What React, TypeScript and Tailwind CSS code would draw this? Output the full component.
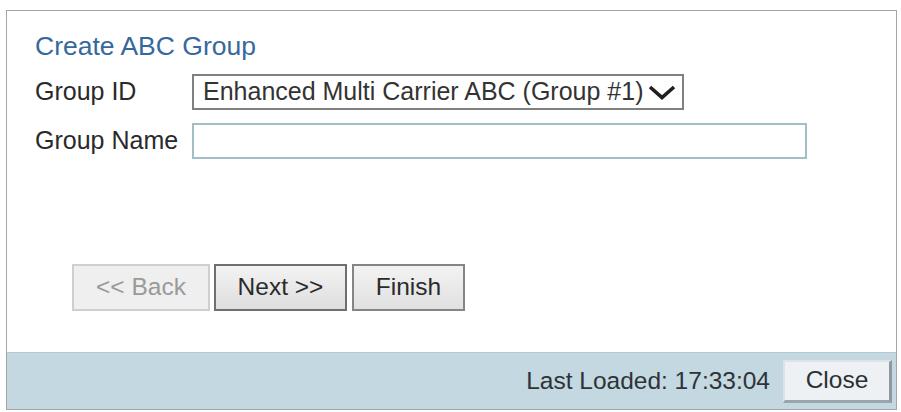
import React from "react";

const font = { fontFamily: '"Liberation Sans", Arial, sans-serif' };

function Chevron() {
  return (
    <svg width="28" height="15" viewBox="0 0 28 15" className="shrink-0">
      <polyline
        points="2,2 14,12.5 26,2"
        fill="none"
        stroke="#1f1f1f"
        strokeWidth="3.6"
        strokeLinejoin="miter"
        strokeLinecap="butt"
      />
    </svg>
  );
}

export default function App() {
  return (
    <div className="w-[901px] h-[412px] bg-white pt-[10px] pl-[6px]" style={font}>
      <div className="w-[891px] h-[400px] border border-[#a6a6a6] flex flex-col bg-white">
        {/* body */}
        <div className="flex-1 pl-[28px] pt-[20px]">
          <h1 className="text-[26.5px] leading-[30px] text-[#37689d]">
            Create ABC Group
          </h1>

          <div className="flex items-center mt-[13px] h-[36px]">
            <span className="w-[157px] text-[25px] text-[#2a2a2a]">Group ID</span>
            <div className="flex items-center gap-[5px] h-[36px] w-[492px] border-2 border-[#808080] pl-[9px] pr-[6px]">
              <span className="text-[25px] text-[#333] whitespace-nowrap">
                Enhanced Multi Carrier ABC (Group #1)
              </span>
              <Chevron />
            </div>
          </div>

          <div className="flex items-center mt-[13px] h-[36px]">
            <span className="w-[157px] text-[25px] text-[#2a2a2a]">Group Name</span>
            <div className="h-[36px] w-[615px] border-2 border-[#a2bec6] bg-white" />
          </div>

          <div className="flex items-center mt-[105px] ml-[37px]">
            <button className="w-[138px] h-[47px] border-2 border-[#cfcfcf] bg-[#efefef] text-[24.5px] text-[#9a9a9a]">
              &lt;&lt; Back
            </button>
            <button className="ml-[4px] w-[133px] h-[47px] border-2 border-[#6f6f6f] bg-gradient-to-b from-[#f3f3f3] to-[#dedede] text-[24.5px] text-[#2b2b2b]">
              Next &gt;&gt;
            </button>
            <button className="ml-[5px] w-[113px] h-[47px] border-2 border-[#858585] bg-gradient-to-b from-[#f3f3f3] to-[#e0e0e0] text-[24.5px] text-[#2b2b2b]">
              Finish
            </button>
          </div>
        </div>

        {/* footer */}
        <div className="h-[57px] bg-[#c4d8e1] border-t border-[#b3c9d3] flex items-center justify-end pr-[4px]">
          <span className="text-[24.5px] text-[#2e3338] mr-[13px]">Last Loaded: 17:33:04</span>
          <button className="w-[109px] h-[43px] bg-[#eef1f4] border-t-2 border-l-2 border-r-[3px] border-b-[3px] border-t-[#dde3e7] border-l-[#dde3e7] border-r-[#8e999f] border-b-[#9aa5ab] text-[24.5px] text-[#2b2f33]">
            Close
          </button>
        </div>
      </div>
    </div>
  );
}
